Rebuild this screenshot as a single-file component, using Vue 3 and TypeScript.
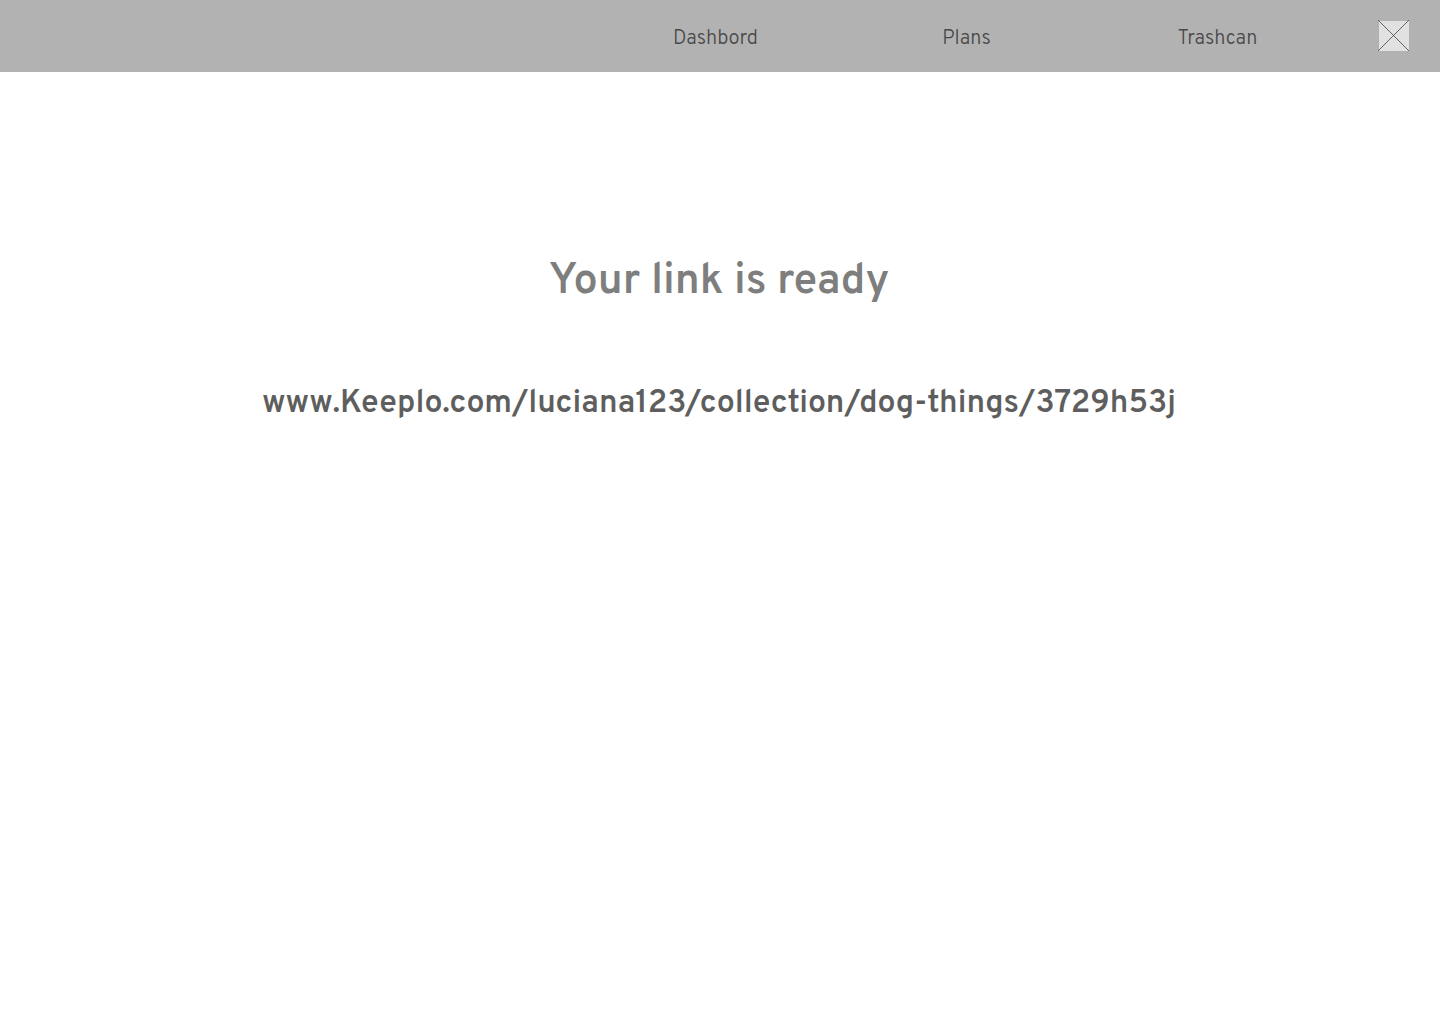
<script setup lang="ts">
interface NavItem {
  label: string
  href: string
}

const navItems: NavItem[] = [
  { label: 'Dashbord', href: '#dashboard' },
  { label: 'Plans', href: '#plans' },
  { label: 'Trashcan', href: '#trashcan' },
]

const shareLink = 'www.Keeplo.com/luciana123/collection/dog-things/3729h53j'
</script>

<template>
  <div class="page">
    <header class="topbar">
      <nav class="nav" aria-label="Main">
        <a v-for="item in navItems" :key="item.label" class="nav-link" :href="item.href">{{ item.label }}</a>
      </nav>
      <button class="profile" type="button" aria-label="Profile">
        <svg viewBox="0 0 32 32" width="32" height="32" aria-hidden="true">
          <rect x="1" y="1" width="30" height="30" fill="#e1e1e1" />
          <path d="M0 0L31 31M31 0L0 31" stroke="#444" stroke-width="0.8" fill="none" />
        </svg>
      </button>
    </header>
    <main class="content">
      <h1 class="title">Your link is ready</h1>
      <a class="share-link" href="#share">{{ shareLink }}</a>
    </main>
  </div>
</template>

<style>
body {
  margin: 0;
  background: #fff;
}
</style>

<style scoped>
.page {
  font-family: Overpass, Roboto, sans-serif;
}
.topbar {
  display: flex;
  align-items: center;
  justify-content: flex-end;
  box-sizing: border-box;
  height: 72px;
  padding-right: 30px;
  background: #b2b2b2;
}
.nav {
  display: flex;
  margin-right: 35px;
}
.nav-link {
  width: 251px;
  padding-top: 6px;
  font-size: 20px;
  font-weight: 300;
  line-height: 28px;
  text-align: center;
  color: #484848;
  text-decoration: none;
}
.profile {
  display: block;
  width: 32px;
  height: 32px;
  padding: 0;
  border: 0;
  background: none;
}
.profile svg {
  display: block;
}
.content {
  display: flex;
  flex-direction: column;
  align-items: center;
  padding: 180px 2px 0 0;
}
.title {
  margin: 0;
  font-size: 43px;
  font-weight: 600;
  line-height: 60px;
  color: #7e7e7e;
}
.share-link {
  margin-top: 70px;
  font-size: 32px;
  font-weight: 600;
  line-height: 44px;
  color: #5e5e5e;
  text-decoration: none;
}
</style>
